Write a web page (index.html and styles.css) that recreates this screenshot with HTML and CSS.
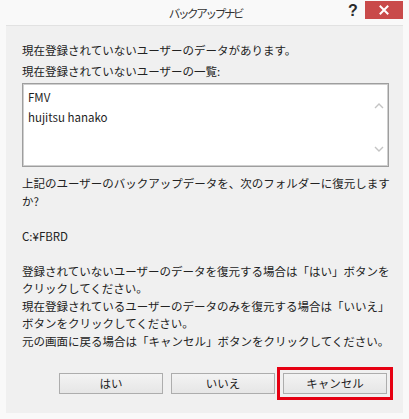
FILE: index.html
```html
<!DOCTYPE html>
<html lang="ja">
<head>
<meta charset="utf-8">
<title>バックアップナビ</title>
<link rel="stylesheet" href="styles.css">
</head>
<body>
<div class="window">
  <div class="titlebar">
    <div class="spacer"></div>
    <div class="title">バックアップナビ</div>
    <div class="controls">
      <span class="help">?</span>
      <span class="close">
        <svg width="10" height="10" viewBox="0 0 10 10"><path d="M1.5 1.5 L8.5 8.5 M8.5 1.5 L1.5 8.5" stroke="#fff" stroke-width="2" stroke-linecap="square"/></svg>
      </span>
    </div>
  </div>
  <div class="panel">
    <p class="line l1">現在登録されていないユーザーのデータがあります。</p>
    <p class="line l2">現在登録されていないユーザーの一覧:</p>
    <div class="listbox">
      <div class="items">
        <div class="item">FMV</div>
        <div class="item">hujitsu hanako</div>
      </div>
      <div class="scroll">
        <svg width="10" height="6" viewBox="0 0 10 6"><path d="M1 5 L5 1 L9 5" fill="none" stroke="#c4c4c4" stroke-width="1.4"/></svg>
        <svg width="10" height="6" viewBox="0 0 10 6"><path d="M1 1 L5 5 L9 1" fill="none" stroke="#c4c4c4" stroke-width="1.4"/></svg>
      </div>
    </div>
    <p class="message">上記のユーザーのバックアップデータを、次のフォルダーに復元します<br>か?<br><br>C:¥FBRD<br><br>登録されていないユーザーのデータを復元する場合は「はい」ボタンを<br>クリックしてください。<br>現在登録されているユーザーのデータのみを復元する場合は「いいえ」<br>ボタンをクリックしてください。<br>元の画面に戻る場合は「キャンセル」ボタンをクリックしてください。</p>
    <div class="buttons">
      <button class="btn">はい</button>
      <button class="btn">いいえ</button>
      <button class="btn highlight">キャンセル</button>
    </div>
  </div>
</div>
</body>
</html>
```

FILE: styles.css
```css
html, body {
  margin: 0;
  padding: 0;
}
body {
  width: 409px;
  height: 419px;
  overflow: hidden;
  background: #f8f8f8;
  font-family: "Noto Sans CJK JP", "Noto Sans", sans-serif;
  color: #222;
}
.window {
  width: 409px;
  height: 419px;
  box-sizing: border-box;
  display: flex;
  flex-direction: column;
  background: #f9f9f9;
}
.titlebar {
  height: 25px;
  display: grid;
  grid-template-columns: 1fr auto 1fr;
  align-items: start;
}
.title {
  font-size: 11.5px;
  letter-spacing: -2.3px;
  line-height: 26px;
  color: #333;
  padding-left: 2px;
}
.controls {
  justify-self: end;
  display: flex;
  align-items: flex-start;
  gap: 8px;
  padding-right: 6px;
}
.help {
  font-family: "Liberation Sans", Arial, sans-serif;
  font-weight: bold;
  font-size: 16px;
  line-height: 22px;
  color: #2a2a2a;
  width: 9px;
  text-align: center;
}
.close {
  margin-top: 1px;
  width: 38px;
  height: 18px;
  background: #c94a4a;
  display: flex;
  align-items: center;
  justify-content: center;
}
.panel {
  margin: 0 6px 6px;
  flex: 1;
  background: #f0f0f0;
  border-top: 1px solid #e2e2e2;
  padding: 14px 14px 0 16px;
  display: flex;
  flex-direction: column;
}
.line {
  margin: 0;
  font-size: 11.5px;
  line-height: 20px;
  white-space: nowrap;
}
.l2 {
  margin-top: 1px;
}
.listbox {
  margin-top: 2px;
  height: 84px;
  box-sizing: border-box;
  border: 1px solid #9e9e9e;
  box-shadow: inset 0 0 0 1px #cfcfcf;
  background: #fff;
  display: flex;
}
.items {
  flex: 1;
  padding: 3px 0 0 5px;
}
.item {
  font-size: 11.5px;
  line-height: 20px;
  color: #1e1e1e;
}
.scroll {
  width: 17px;
  padding: 19px 0 14px;
  display: flex;
  flex-direction: column;
  justify-content: space-between;
  align-items: center;
  margin-right: 1px;
}
.message {
  margin: 8px 0 0;
  font-size: 11.5px;
  line-height: 17.5px;
  white-space: nowrap;
}
.buttons {
  margin-top: 23px;
  display: flex;
  justify-content: flex-end;
  gap: 8px;
  padding-right: 2px;
}
.btn {
  width: 104px;
  height: 21px;
  padding: 0;
  border: 1px solid #adadad;
  background: linear-gradient(#f3f3f3, #e6e6e6);
  font-family: "Noto Sans CJK JP", "Noto Sans", sans-serif;
  font-size: 11.5px;
  line-height: 19px;
  color: #222;
}
.highlight {
  outline: 3px solid #e60012;
  outline-offset: 3px;
}
```
